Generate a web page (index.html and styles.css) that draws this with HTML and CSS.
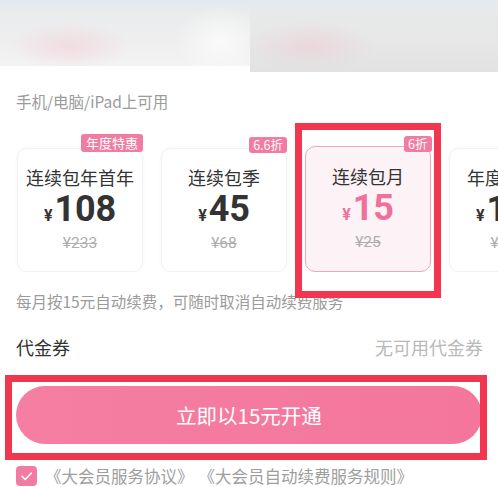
FILE: index.html
```html
<!DOCTYPE html>
<html lang="zh-CN">
<head>
<meta charset="utf-8">
<link rel="stylesheet" href="styles.css">
</head>
<body>
<div class="page">
  <div class="hero">
    <div class="hero-l"></div>
    <div class="hero-r"></div>
  </div>
  <div class="hint">手机/电脑/iPad上可用</div>
  <div class="plans">
    <div class="card">
      <span class="badge badge-big">年度特惠</span>
      <div class="title">连续包年首年</div>
      <div class="price"><span class="yen">¥</span><span class="num">108</span></div>
      <div class="old">¥233</div>
    </div>
    <div class="card">
      <span class="badge">6.6折</span>
      <div class="title">连续包季</div>
      <div class="price"><span class="yen">¥</span><span class="num">45</span></div>
      <div class="old">¥68</div>
    </div>
    <div class="card card-on">
      <span class="badge">6折</span>
      <div class="title">连续包月</div>
      <div class="price"><span class="yen">¥</span><span class="num">15</span></div>
      <div class="old">¥25</div>
    </div>
    <div class="card">
      <div class="title">年度大会员</div>
      <div class="price"><span class="yen">¥</span><span class="num">168</span></div>
      <div class="old">¥2980</div>
    </div>
  </div>
  <div class="desc">每月按15元自动续费，可随时取消自动续费服务</div>
  <div class="coupon">
    <span class="coupon-l">代金券</span>
    <span class="coupon-r">无可用代金券</span>
  </div>
  <div class="btn">立即以15元开通</div>
  <div class="agree">
    <span class="check"><svg width="21" height="20" viewBox="0 0 21 20"><path d="M6 10.3l3.2 3.2L15.2 7.2" fill="none" stroke="#fff" stroke-width="1.6" stroke-linecap="round" stroke-linejoin="round"/></svg></span>
    <span class="agree-t">《大会员服务协议》</span>
    <span class="agree-t agree-t2">《大会员自动续费服务规则》</span>
  </div>
  <div class="mark mark-card"></div>
  <div class="mark mark-btn"></div>
</div>
</body>
</html>
```

FILE: styles.css
```css
* { box-sizing: border-box; }
html, body { margin: 0; padding: 0; background: #fff; }
body {
  width: 498px;
  height: 487px;
  overflow: hidden;
  font-family: "Noto Sans CJK SC", "Noto Sans", sans-serif;
  color: #333;
}
.page { position: relative; width: 498px; height: 487px; overflow: hidden; }

.hero { display: flex; align-items: flex-start; height: 72px; }
.hero-l {
  width: 250px;
  height: 66px;
  background:
    radial-gradient(ellipse 60px 24px at 70px 46px, rgba(242, 204, 214, 0.55), rgba(242, 204, 214, 0) 100%),
    radial-gradient(ellipse 45px 35px at 220px 42px, rgba(250, 250, 250, 1), rgba(250, 250, 250, 0) 100%),
    linear-gradient(180deg, #e3e9f1 0px, #eaeced 14px, #eeeeee 40px, #f3f3f3 66px);
}
.hero-r {
  flex: 1;
  height: 72px;
  background:
    radial-gradient(ellipse 65px 24px at 60px 46px, rgba(236, 204, 212, 0.55), rgba(236, 204, 212, 0) 100%),
    linear-gradient(180deg, #e4eaf1 0px, #e8e9ea 14px, #e7e7e7 40px, #e2e2e2 72px);
}

.hint {
  margin: 19px 0 0 16px;
  font-size: 15.5px;
  line-height: 20px;
  color: #9b9b9b;
}

.plans {
  display: flex;
  gap: 18px;
  margin-top: 23px;
  padding: 14px 0 0 17px;
  overflow: hidden;
  height: 138px;
}
.card {
  position: relative;
  flex: 0 0 126px;
  height: 124px;
  border: 1px solid #f1f1f1;
  border-radius: 10px;
  background: #fff;
  box-shadow: 0 0 4px rgba(0, 0, 0, 0.03);
  display: flex;
  flex-direction: column;
  align-items: center;
  padding-top: 16px;
}
.card-on {
  margin-top: -2px;
  height: 126px;
  border: 1.5px solid #f1a7bf;
  background: #fdf2f6;
  padding-top: 17px;
}
.badge {
  position: absolute;
  top: -12px;
  right: -1px;
  height: 16px;
  padding: 0 4px;
  border-radius: 3px;
  background: #f27ba2;
  color: #fff;
  font-size: 12.5px;
  line-height: 16px;
}
.badge-big { top: -15px; height: 18px; line-height: 18px; font-size: 13px; padding: 0 5px; }
.card-on .badge { top: -11px; right: -1.5px; }

.title { font-size: 18px; line-height: 24px; color: #333; white-space: nowrap; }
.price {
  display: flex;
  align-items: baseline;
  height: 40px;
  line-height: 40px;
  font-family: Roboto, "Liberation Sans", sans-serif;
  color: #333;
}
.yen { font-size: 16px; font-weight: 700; margin-right: 2px; }
.num { font-size: 36px; font-weight: 700; letter-spacing: -0.2px; }
.card-on .price { color: #f0709a; }
.old {
  margin-top: 4px;
  font-family: Roboto, "Liberation Sans", sans-serif;
  font-size: 15.5px;
  line-height: 20px;
  color: #adadad;
  text-decoration: line-through;
}

.desc {
  margin: 19px 0 0 16px;
  font-size: 15.5px;
  line-height: 20px;
  color: #9b9b9b;
  white-space: nowrap;
}
.coupon {
  display: flex;
  justify-content: space-between;
  margin: 24px 15px 0 16px;
  font-size: 18px;
  line-height: 24px;
}
.coupon-l { color: #333; }
.coupon-r { color: #b9b9b9; }

.btn {
  margin: 27px 16px 0 16px;
  height: 58px;
  border-radius: 29px;
  background: linear-gradient(90deg, #f57ea2, #f4769d);
  color: #fff;
  font-size: 20.5px;
  line-height: 58px;
  text-align: center;
}

.agree {
  display: flex;
  align-items: center;
  margin: 21px 0 0 16px;
}
.check {
  flex: 0 0 21px;
  width: 21px;
  height: 20px;
  border-radius: 4px;
  background: #f27ba2;
  display: flex;
}
.agree-t {
  margin-left: 8px;
  font-size: 16.5px;
  line-height: 22px;
  color: #9e9e9e;
  white-space: nowrap;
}
.agree-t2 { margin-left: 5px; }

.mark {
  position: absolute;
  border: 7px solid #f2364f;
}
.mark-card { left: 295px; top: 123px; width: 146px; height: 175px; }
.mark-btn { left: 5px; top: 375px; width: 482px; height: 85px; }
```
